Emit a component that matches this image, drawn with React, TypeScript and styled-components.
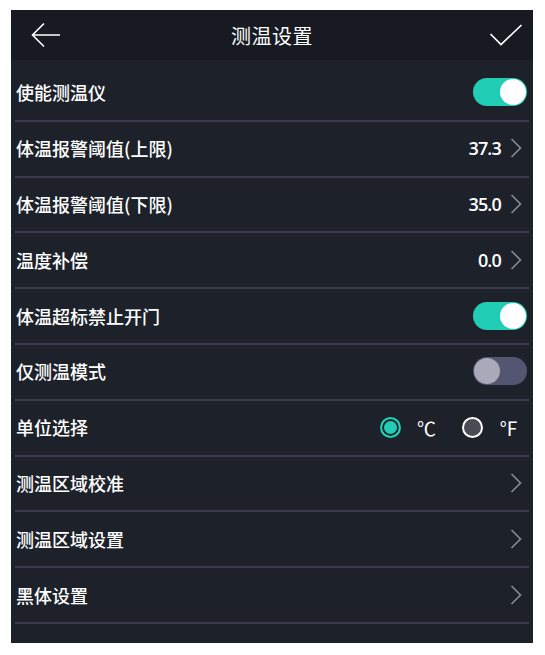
import { useState } from 'react';
import styled, { createGlobalStyle } from 'styled-components';

const GlobalStyle = createGlobalStyle`
  body {
    margin: 0;
    background: #ffffff;
    font-family: "Noto Sans CJK SC", "Noto Sans", sans-serif;
  }
`;

const colors = {
  header: '#171a21',
  body: '#1d222a',
  divider: '#3c3b4d',
  teal: '#22cdb5',
  chevron: '#8b8d92',
  trackOff: '#545570',
  knobOff: '#a9a9b9',
};

type Row =
  | { kind: 'toggle'; label: string; on: boolean }
  | { kind: 'value'; label: string; value?: string }
  | { kind: 'unit'; label: string };

const ROWS: Row[] = [
  { kind: 'toggle', label: '使能测温仪', on: true },
  { kind: 'value', label: '体温报警阈值(上限)', value: '37.3' },
  { kind: 'value', label: '体温报警阈值(下限)', value: '35.0' },
  { kind: 'value', label: '温度补偿', value: '0.0' },
  { kind: 'toggle', label: '体温超标禁止开门', on: true },
  { kind: 'toggle', label: '仅测温模式', on: false },
  { kind: 'unit', label: '单位选择' },
  { kind: 'value', label: '测温区域校准' },
  { kind: 'value', label: '测温区域设置' },
  { kind: 'value', label: '黑体设置' },
];

function Chevron() {
  return (
    <svg width="12" height="20" viewBox="0 0 12 20">
      <path d="M1.5 1 L10.5 10 L1.5 19" fill="none" stroke={colors.chevron} strokeWidth="1.6" />
    </svg>
  );
}

function App() {
  const [unit, setUnit] = useState<'C' | 'F'>('C');
  const [toggles, setToggles] = useState<boolean[]>(
    ROWS.map((r) => (r.kind === 'toggle' ? r.on : false))
  );

  const flip = (i: number) =>
    setToggles((prev) => prev.map((v, j) => (j === i ? !v : v)));

  return (
    <>
      <GlobalStyle />
      <StyledPanel>
        <StyledHeader>
          <StyledIconButton aria-label="back">
            <svg width="30" height="26" viewBox="0 0 30 26">
              <path
                d="M29 13 H2 M13 1.5 L1.5 13 L13 24.5"
                fill="none"
                stroke="#ffffff"
                strokeWidth="1.6"
              />
            </svg>
          </StyledIconButton>
          <StyledTitle>测温设置</StyledTitle>
          <StyledIconButton aria-label="confirm">
            <svg width="34" height="22" viewBox="0 0 34 22">
              <path
                d="M1.5 10 L12 20.5 L32.5 1"
                fill="none"
                stroke="#ffffff"
                strokeWidth="1.7"
              />
            </svg>
          </StyledIconButton>
        </StyledHeader>
        <StyledList>
          {ROWS.map((row, i) => (
            <StyledRow key={row.label}>
              <StyledLabel>{row.label}</StyledLabel>
              {row.kind === 'toggle' && (
                <StyledSwitch $on={toggles[i]} onClick={() => flip(i)}>
                  <StyledKnob $on={toggles[i]} />
                </StyledSwitch>
              )}
              {row.kind === 'value' && (
                <StyledValueWrap>
                  {row.value && <StyledValue>{row.value}</StyledValue>}
                  <Chevron />
                </StyledValueWrap>
              )}
              {row.kind === 'unit' && (
                <StyledUnits>
                  <StyledUnitOption onClick={() => setUnit('C')}>
                    <StyledRadio $checked={unit === 'C'} />
                    <StyledUnitText>℃</StyledUnitText>
                  </StyledUnitOption>
                  <StyledUnitOption onClick={() => setUnit('F')}>
                    <StyledRadio $checked={unit === 'F'} />
                    <StyledUnitText>℉</StyledUnitText>
                  </StyledUnitOption>
                </StyledUnits>
              )}
            </StyledRow>
          ))}
        </StyledList>
      </StyledPanel>
    </>
  );
}

const StyledPanel = styled.div`
  margin: 10px 0 0 11px;
  width: 522px;
  height: 633px;
  background: ${colors.body};
  display: flex;
  flex-direction: column;
`;

const StyledHeader = styled.div`
  height: 50px;
  background: ${colors.header};
  display: flex;
  align-items: center;
  justify-content: space-between;
  padding: 0 10px 0 20px;
  flex-shrink: 0;
`;

const StyledIconButton = styled.div`
  display: flex;
  align-items: center;
  cursor: pointer;
`;

const StyledTitle = styled.div`
  color: #ffffff;
  font-size: 20px;
  letter-spacing: 0.5px;
  margin-right: 6px;
`;

const StyledList = styled.div`
  padding: 6px 4px 0;
  display: flex;
  flex-direction: column;
`;

const StyledRow = styled.div`
  box-sizing: border-box;
  height: 55.8px;
  border-bottom: 2px solid ${colors.divider};
  display: flex;
  align-items: center;
  justify-content: space-between;
  padding: 0 2px 1px 1px;
`;

const StyledLabel = styled.div`
  color: #ffffff;
  font-size: 18px;
  font-weight: 500;
`;

const StyledSwitch = styled.div<{ $on: boolean }>`
  width: 54px;
  height: 28px;
  border-radius: 14px;
  background: ${(p) => (p.$on ? colors.teal : colors.trackOff)};
  display: flex;
  align-items: center;
  justify-content: ${(p) => (p.$on ? 'flex-end' : 'flex-start')};
  padding: 0 1px;
  box-sizing: border-box;
  cursor: pointer;
`;

const StyledKnob = styled.div<{ $on: boolean }>`
  width: 26px;
  height: 26px;
  border-radius: 50%;
  background: ${(p) => (p.$on ? '#ffffff' : colors.knobOff)};
`;

const StyledValueWrap = styled.div`
  display: flex;
  align-items: center;
  gap: 9px;
  padding-right: 5px;
`;

const StyledValue = styled.span`
  color: #ffffff;
  font-family: "Open Sans", "Noto Sans", sans-serif;
  font-size: 18px;
  font-weight: 600;
  letter-spacing: -0.8px;
`;

const StyledUnits = styled.div`
  display: flex;
  align-items: center;
  gap: 26px;
  padding-right: 9px;
`;

const StyledUnitOption = styled.div`
  display: flex;
  align-items: center;
  gap: 16px;
  cursor: pointer;
`;

const StyledRadio = styled.div<{ $checked: boolean }>`
  box-sizing: border-box;
  width: 21px;
  height: 21px;
  border-radius: 50%;
  border: 2px solid ${(p) => (p.$checked ? colors.teal : '#ffffff')};
  background: ${(p) => (p.$checked ? colors.teal : '#4a4b53')};
  box-shadow: ${(p) => (p.$checked ? `inset 0 0 0 2px ${colors.body}` : 'none')};
`;

const StyledUnitText = styled.span`
  color: #ffffff;
  font-family: "Noto Sans CJK SC", "DejaVu Sans", sans-serif;
  font-size: 19px;
`;

export default App;
